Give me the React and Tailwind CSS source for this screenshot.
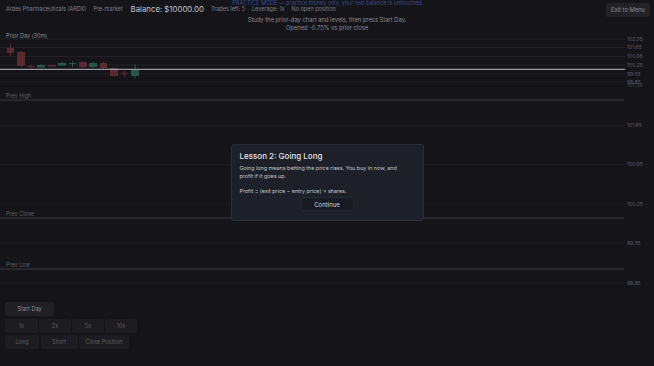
import React from "react";

const candles = [
  { x: 7, w: 7, t: 48, b: 53, wt: 44, wb: 56, c: "r" },
  { x: 17, w: 8, t: 52, b: 66, wt: 51, wb: 67, c: "r" },
  { x: 27, w: 8, t: 66, b: 67, wt: 65, wb: 70, c: "r" },
  { x: 37, w: 8, t: 65, b: 67.5, wt: 64, wb: 68, c: "g" },
  { x: 48, w: 8, t: 65, b: 66.5, wt: 65, wb: 66.5, c: "r" },
  { x: 58, w: 8, t: 63, b: 65.5, wt: 62, wb: 66, c: "g" },
  { x: 69, w: 7, t: 63, b: 64, wt: 61, wb: 67, c: "g" },
  { x: 79, w: 8, t: 62, b: 67, wt: 61, wb: 68, c: "r" },
  { x: 89, w: 8, t: 63, b: 67, wt: 62, wb: 68, c: "g" },
  { x: 100, w: 7, t: 63, b: 68, wt: 62, wb: 70, c: "r" },
  { x: 110, w: 8, t: 68, b: 76, wt: 67, wb: 77, c: "r" },
  { x: 121, w: 7, t: 73, b: 74, wt: 71, wb: 77, c: "r" },
  { x: 131, w: 8, t: 70, b: 76, wt: 64, wb: 78, c: "g" },
];

const upperGrid = [
  [39, "102.35"],
  [47.5, "101.65"],
  [56.5, "100.95"],
  [65, "100.25"],
  [74, "99.55"],
  [82, "98.85"],
];

const lowerGrid = [
  [125.5, "101.65"],
  [164.5, "100.95"],
  [204, "100.25"],
  [243, "99.55"],
  [283, "98.85"],
];

const levels = [
  [100, "Prev High"],
  [218, "Prev Close"],
  [269, "Prev Low"],
];

function Chart() {
  return (
    <svg width="654" height="262" viewBox="0 32 654 262" className="block">
      <text x="6" y="37.5" fontSize="5.5" fill="#8a8a92" fontFamily="Inter, sans-serif">
        Prior Day (30m)
      </text>
      {upperGrid.map(([y, l]) => (
        <g key={"u" + l}>
          <line x1="0" x2="625" y1={y} y2={y} stroke="#232329" strokeWidth="0.8" />
          <text x="627" y={y + 1.8} fontSize="5" fill="#5e5e66" fontFamily="Inter, sans-serif">
            {l}
          </text>
        </g>
      ))}
      <text x="627" y="86.5" fontSize="5" fill="#4a4a52" fontFamily="Inter, sans-serif">
        100.25
      </text>
      {candles.map((k, i) => {
        const fill = k.c === "r" ? "#5a2a2d" : "#22574a";
        const stroke = k.c === "r" ? "#6e3336" : "#2b6b58";
        const cx = k.x + k.w / 2;
        return (
          <g key={i}>
            <line x1={cx} x2={cx} y1={k.wt} y2={k.wb} stroke={stroke} strokeWidth="0.8" />
            <rect x={k.x} y={k.t} width={k.w} height={Math.max(1, k.b - k.t)} fill={fill} />
          </g>
        );
      })}
      <line x1="0" x2="625" y1="69.3" y2="69.3" stroke="#b9b9c0" strokeWidth="1" />
      {lowerGrid.map(([y, l]) => (
        <g key={"l" + l}>
          <line x1="0" x2="625" y1={y} y2={y} stroke="#202026" strokeWidth="0.8" />
          <text x="627" y={y + 1.8} fontSize="5" fill="#5e5e66" fontFamily="Inter, sans-serif">
            {l}
          </text>
        </g>
      ))}
      {levels.map(([y, l]) => (
        <g key={l}>
          <line x1="0" x2="624" y1={y} y2={y} stroke="#3b3b42" strokeWidth="1" />
          <text x="6" y={y - 2.5} fontSize="5.5" fill="#5f5f67" fontFamily="Inter, sans-serif">
            {l}
          </text>
        </g>
      ))}
    </svg>
  );
}

function Btn({ children, className = "" }) {
  return (
    <div
      className={
        "h-[14px] flex items-center justify-center rounded-[2px] bg-[#1c1c21] text-[5.5px] text-[#5c5c64] " +
        className
      }
    >
      {children}
    </div>
  );
}

export default function App() {
  return (
    <div
      className="relative w-[654px] h-[366px] overflow-hidden bg-[#151519] text-[#8a8a92]"
      style={{ fontFamily: "Inter, 'Liberation Sans', sans-serif" }}
    >
      <div className="relative h-[16px] flex items-start pt-[3px] pl-[6px] pr-[4px]">
        <div className="flex items-center gap-[7px] text-[5.5px] text-[#7f7f87] h-[13px]">
          <span>Ardex Pharmaceuticals (ARDX)</span>
          <span>Pre-market</span>
          <span className="text-[7.8px] text-[#c4c4ca] ml-[1px]">Balance: $10000.00</span>
          <span>Trades left: 5</span>
          <span>Leverage: 1x</span>
          <span>No open position</span>
        </div>
        <div className="ml-auto h-[14px] px-[5px] flex items-center rounded-[2px] bg-[#222227] text-[5.8px] text-[#8e8e96]">
          Exit to Menu
        </div>
        <div className="absolute left-0 right-0 top-0 text-center text-[5.5px] leading-[7px] text-[#3d4a8c]">
          PRACTICE MODE — practice money only, your real balance is untouched
        </div>
      </div>
      <div className="flex flex-col items-center text-[5.8px] text-[#8a8a92] leading-[8px]">
        <span>Study the prior-day chart and levels, then press Start Day.</span>
        <span>Opened -0.75% vs prior close</span>
      </div>
      <Chart />
      <div className="flex flex-col gap-[2px] px-[5px] pt-[8px]">
        <div className="flex">
          <Btn className="w-[49px] bg-[#202025] text-[#8e8e96]">Start Day</Btn>
        </div>
        <div className="flex gap-[1px] mt-[1px]">
          <Btn className="w-[33px]">1x</Btn>
          <Btn className="w-[32px]">2x</Btn>
          <Btn className="w-[32px]">5x</Btn>
          <Btn className="w-[32px]">10x</Btn>
        </div>
        <div className="flex gap-[1.5px]">
          <Btn className="w-[34px]">Long</Btn>
          <Btn className="w-[37px]">Short</Btn>
          <Btn className="w-[50px]">Close Position</Btn>
        </div>
      </div>

      <div className="fixed inset-0 flex items-center justify-center">
        <div className="w-[193px] rounded-[3px] border border-[#2a2e37] bg-[#1d2028] px-[8px] pt-[6px] pb-[9px] mt-[-1px]">
          <div className="text-[8px] font-medium text-[#e4e4e8] leading-[10px]">Lesson 2: Going Long</div>
          <div className="mt-[4px] pr-[12px] text-[5.4px] leading-[7.5px] text-[#c6c8ce]">
            Going long means betting the price rises. You buy in now, and profit if it goes up.
          </div>
          <div className="mt-[8px] text-[5.4px] leading-[7px] text-[#c6c8ce]">
            Profit = (exit price − entry price) × shares.
          </div>
          <div className="mt-[2px] flex justify-center">
            <div className="w-[53px] h-[14px] flex items-center justify-center rounded-[2px] border border-[#262a32] bg-[#171a20] text-[6px] text-[#d2d4da]">
              Continue
            </div>
          </div>
        </div>
      </div>
    </div>
  );
}
